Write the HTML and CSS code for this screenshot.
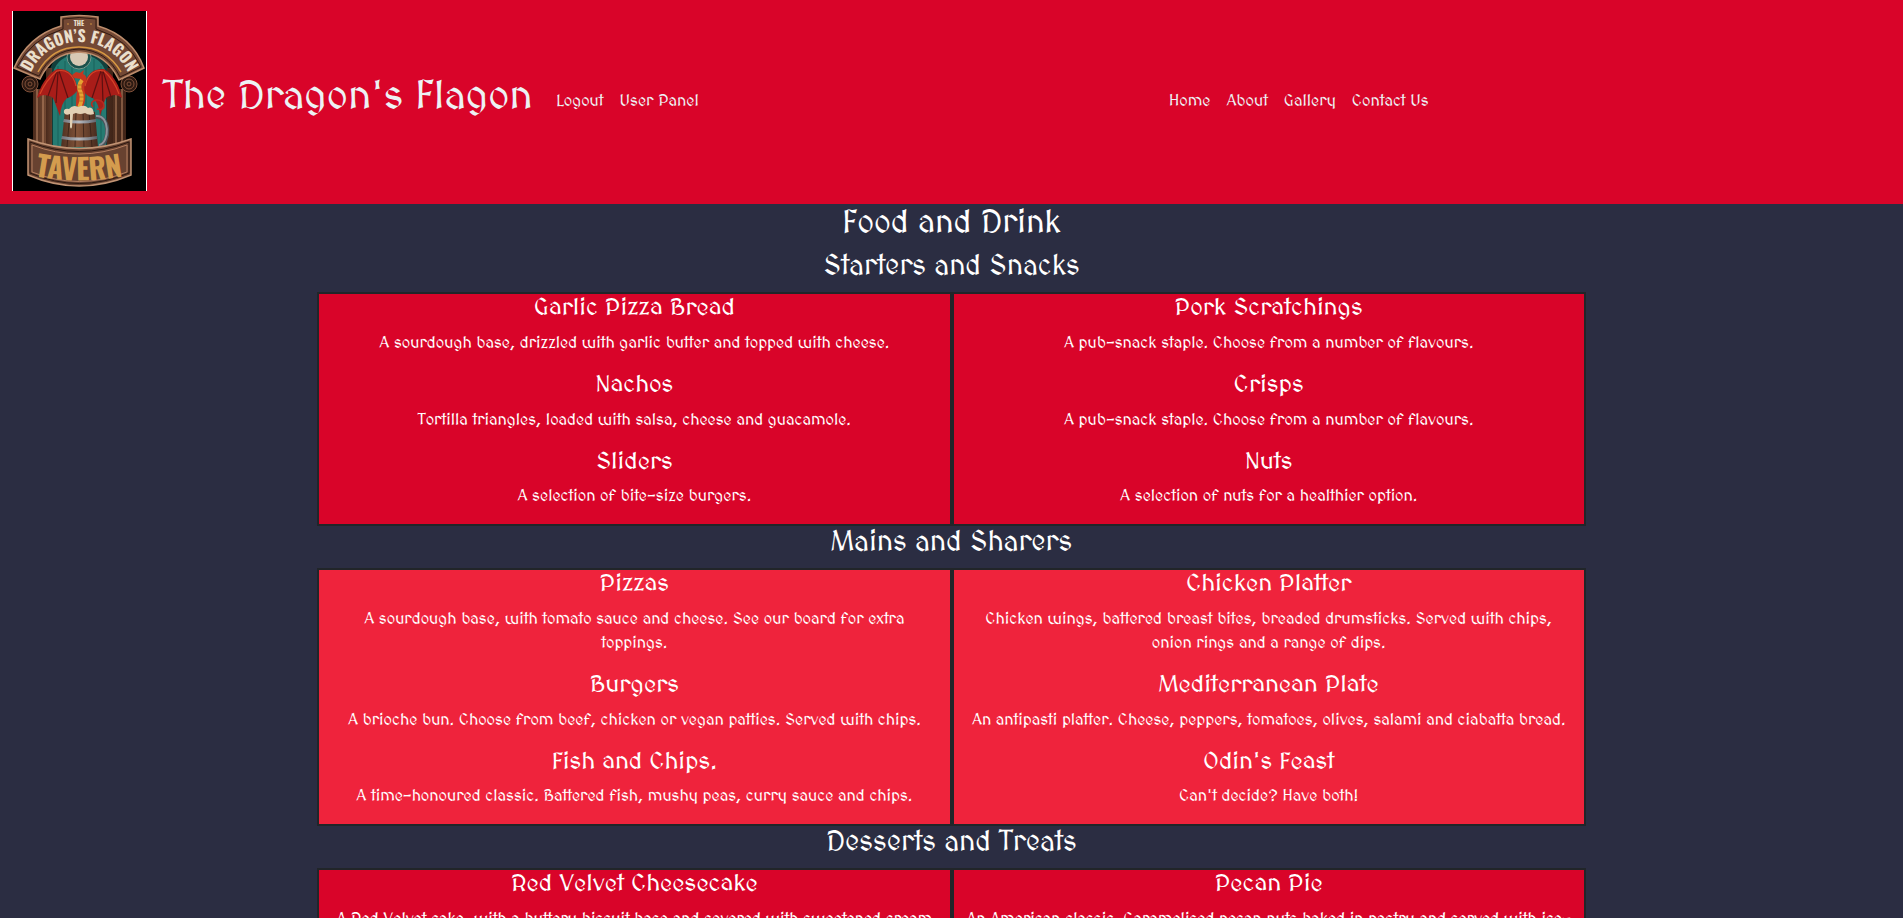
FILE: index.html
```html
<!DOCTYPE html>
<html lang="en">
<head>
<meta charset="utf-8">
<title>The Dragon's Flagon</title>
<link rel="stylesheet" href="styles.css">
</head>
<body>
<header class="navbar">
  <a class="brand" href="#">
    <svg class="logo" viewBox="0 0 135 180" role="img" aria-label="The Dragon's Flagon Tavern">
      <defs>
        <linearGradient id="wood" x1="0" x2="1" y1="0" y2="0">
          <stop offset="0" stop-color="#4a2a1c"/><stop offset=".3" stop-color="#a06c4c"/><stop offset=".6" stop-color="#6b412d"/><stop offset="1" stop-color="#3f2418"/>
        </linearGradient>
        <linearGradient id="barrel" x1="0" x2="1" y1="0" y2="0">
          <stop offset="0" stop-color="#4e3021"/><stop offset=".45" stop-color="#835439"/><stop offset="1" stop-color="#452a1e"/>
        </linearGradient>
        <linearGradient id="steel" x1="0" x2="1" y1="0" y2="0">
          <stop offset="0" stop-color="#6c7078"/><stop offset=".5" stop-color="#b4b8bf"/><stop offset="1" stop-color="#5c6068"/>
        </linearGradient>
        <path id="arc" d="M18 64C35 20 99 20 117 64"/>
        <path id="base" d="M16 164Q67 175 118 164"/>
      </defs>
      <path fill="#000" d="M0 0h135v180H0z"/>
      <path fill="#fff" d="M0 0h1v180H0zM134 0h1v180h-1z"/>
      <path fill="#123f3c" d="M37 145V62Q40 42 67 40Q95 42 98 62V145z"/>
      <path fill="#257b72" d="M41 143V62Q45 45 67 43Q90 45 94 62V143z"/>
      <path stroke="#1b625b" stroke-width="1" d="M46 55v86M53 50v90M60 45v95M74 45v95M82 48v92M89 55v86"/>
      <circle cx="67" cy="46" r="12" fill="#1b514b" stroke="#78988b"/>
      <circle cx="67" cy="46" r="9" fill="#d8c9b4"/>
      <path fill="url(#wood)" d="M21 78h14v66H21zM100 78h14v66h-14z"/>
      <path fill="none" stroke="#be8966" d="M25 78v58M31 78v65M104 78v65M110 78v58"/>
      <path fill="url(#wood)" d="M34 57h6v87h-6zM95 57h6v87h-6z"/>
      <g fill="#2d1a12" stroke="#805039" stroke-width="1">
        <circle cx="18" cy="73" r="8"/><circle cx="18" cy="73" r="5"/><circle cx="18" cy="73" r="2"/>
        <circle cx="117" cy="73" r="8"/><circle cx="117" cy="73" r="5"/><circle cx="117" cy="73" r="2"/>
      </g>
      <path fill="#734834" stroke="#bd8d6c" stroke-width="1.5" d="M2 57Q16 25 49 15V6Q67 3 86 6V15Q120 25 132 57L107 69Q94 42 67 41Q40 42 28 68z"/>
      <path fill="none" stroke="#2f1a12" d="M5 56Q19 28 51 18V8Q67 5 84 8V18Q116 28 129 56L108 66Q95 39 67 38Q39 39 27 65z"/>
      <path fill="none" stroke="#d79842" stroke-width="1.5" d="M26 61Q40 36 67 36Q94 36 109 61"/>
      <g class="sign">
        <text class="the" x="67" y="15" text-anchor="middle" fill="#eadfcc">THE</text>
        <text class="name" fill="#eadfcc"><textPath href="#arc" startOffset="50%" text-anchor="middle">DRAGON’S FLAGON</textPath></text>
      </g>
      <circle cx="56" cy="13" r=".8" fill="#d79842"/><circle cx="79" cy="13" r=".8" fill="#d79842"/>
      <path fill="url(#barrel)" d="M53 100Q69 95 83 101L86 136H49z"/>
      <path stroke="#352016" stroke-width=".8" d="M58 101l-3 35M64 100l-1 36M71 100l1 36M77 101l3 35"/>
      <path fill="none" stroke="#4b5057" stroke-width="4" d="M84 106C99 104 98 133 87 135"/>
      <path fill="none" stroke="#8d949b" stroke-width="2" d="M84 105C98 103 98 132 87 134"/>
      <path fill="url(#steel)" d="M52 108q16 3 32 0v3q-16 3-33 0zM50 125q17 3 35 0v3q-17 3-36 0z"/>
      <path fill="#a91d19" d="M65 76C63 62 54 57 45 58C34 64 28 76 25 87Q31 82 36 85Q41 84 43 92L48 105Q49 92 55 87Q60 86 65 80zM72 76C74 62 83 57 92 58C102 64 108 76 110 87Q104 82 99 85Q94 84 92 92L88 105Q87 92 81 87Q76 86 71 80z"/>
      <path fill="none" stroke="#5d1010" stroke-width="1.2" d="M45 60L36 85M46 61L44 92M47 60L56 87M91 60L99 86M90 61L91 92M89 60L80 87"/>
      <path fill="none" stroke="#d64427" stroke-width="1.2" d="M64 75C61 62 53 58 45 60Q34 69 28 83M73 75C76 62 84 58 92 60Q102 69 107 83"/>
      <path fill="#c5361f" d="M60 64L64 61L68 62L72 59L71 63Q76 65 74 71Q71 76 73 82Q74 90 71 96L64 95Q64 86 65 79Q66 73 69 68L62 67z"/>
      <path fill="none" stroke="#e6a332" stroke-width="4" d="M70 69Q65 75 69 82Q71 88 67 97"/>
      <path stroke="#a75d1e" stroke-width=".7" d="M66 74h5M66 78h5M67 82h5M67 86h5M66 90h5"/>
      <path fill="none" stroke="#ba2b20" stroke-width="1.6" d="M85 98C95 101 94 88 84 89Q77 91 81 96"/>
      <path fill="#e2d0b4" d="M52 102Q51 97 57 98Q61 93 66 96Q73 93 76 97Q81 95 82 103Q77 105 73 102Q68 104 64 102L61 103L60 116Q59 119 58 116V103Q54 105 52 102z"/>
      <path fill="#684230" stroke="#c19373" stroke-width="1.5" d="M16 128Q67 147 119 128V164Q67 186 16 164z"/>
      <path fill="none" stroke="#2c1810" d="M18 131Q67 150 117 131V162Q67 183 18 162z"/>
      <path fill="none" stroke="#b68060" d="M20 134Q67 152 115 134V161Q67 180 20 161z"/>
      <text class="tavern" fill="#d49c4e"><textPath href="#base" startOffset="50%" text-anchor="middle">TAVERN</textPath></text>
    </svg>
    <span class="brand-name">The Dragon's Flagon</span>
  </a>
  <nav class="links" aria-label="Account">
    <a href="#">Logout</a>
    <a href="#">User Panel</a>
  </nav>
  <nav class="links links-main" aria-label="Main">
    <a href="#">Home</a>
    <a href="#">About</a>
    <a href="#">Gallery</a>
    <a href="#">Contact Us</a>
  </nav>
</header>
<main class="menu">
  <h1 class="menu-title">Food and Drink</h1>
  <h2 class="section-title">Starters and Snacks</h2>
  <section class="row">
    <div class="card">
      <h3>Garlic Pizza Bread</h3>
      <p>A sourdough base, drizzled with garlic butter and topped with cheese.</p>
      <h3>Nachos</h3>
      <p>Tortilla triangles, loaded with salsa, cheese and guacamole.</p>
      <h3>Sliders</h3>
      <p>A selection of bite-size burgers.</p>
    </div>
    <div class="card">
      <h3>Pork Scratchings</h3>
      <p>A pub-snack staple. Choose from a number of flavours.</p>
      <h3>Crisps</h3>
      <p>A pub-snack staple. Choose from a number of flavours.</p>
      <h3>Nuts</h3>
      <p>A selection of nuts for a healthier option.</p>
    </div>
  </section>
  <h2 class="section-title">Mains and Sharers</h2>
  <section class="row row-light">
    <div class="card">
      <h3>Pizzas</h3>
      <p>A sourdough base, with tomato sauce and cheese. See our board for extra toppings.</p>
      <h3>Burgers</h3>
      <p>A brioche bun. Choose from beef, chicken or vegan patties. Served with chips.</p>
      <h3>Fish and Chips.</h3>
      <p>A time-honoured classic. Battered fish, mushy peas, curry sauce and chips.</p>
    </div>
    <div class="card">
      <h3>Chicken Platter</h3>
      <p>Chicken wings, battered breast bites, breaded drumsticks. Served with chips, onion rings and a range of dips.</p>
      <h3>Mediterranean Plate</h3>
      <p>An antipasti platter. Cheese, peppers, tomatoes, olives, salami and ciabatta bread.</p>
      <h3>Odin's Feast</h3>
      <p>Can't decide? Have both!</p>
    </div>
  </section>
  <h2 class="section-title">Desserts and Treats</h2>
  <section class="row">
    <div class="card">
      <h3>Red Velvet Cheesecake</h3>
      <p>A Red Velvet cake, with a buttery biscuit base and covered with sweetened cream</p>
    </div>
    <div class="card">
      <h3>Pecan Pie</h3>
      <p>An American classic. Caramelised pecan nuts baked in pastry and served with ice-</p>
    </div>
  </section>
</main>
</body>
</html>
```
FILE: styles.css
```css
* { box-sizing: border-box; }

body {
  display: flex;
  flex-direction: column;
  height: 100vh;
  margin: 0;
  overflow: hidden;
  background: #fff;
  color: #fff;
  font-family: MedievalSharp, Macondo, Lato, sans-serif;
  font-size: 16px;
  line-height: 1.5;
}

h1, h2, h3, p { margin: 0; font-weight: 400; }
h1, h2, h3 { line-height: 1.2; padding-bottom: 8px; }

.navbar {
  display: flex;
  flex: none;
  align-items: center;
  padding: 11px 12px 13px;
  background: #d90429;
}

.navbar a { color: #edf2f4; text-decoration: none; }

.brand {
  display: flex;
  align-items: center;
  gap: 16px;
  margin-right: 16px;
}

.logo { width: 135px; height: 180px; flex: none; }

.sign, .tavern { font-family: Oswald, "Bebas Neue", "Liberation Sans Narrow", "Liberation Sans", sans-serif; font-weight: 700; }
.the { font-size: 7px; }
.name { font-size: 16px; }
.tavern { font-size: 29px; }

.brand-name { font-size: 40px; line-height: 1.2; padding-bottom: 8px; white-space: nowrap; }

.links { display: flex; }
.links a { padding: 8px; white-space: nowrap; }
.links-main { margin: 0 auto; }

.menu {
  flex: 1;
  min-height: 0;
  margin-bottom: 1px;
  overflow: hidden;
  background: #2b2d42;
  text-align: center;
}

.menu-title { font-size: 32px; }
.section-title { font-size: 28px; }

.row {
  display: grid;
  grid-template-columns: 1fr 1fr;
  width: 66.6667%;
  margin: 0 auto;
}

.card {
  padding: 0 12px;
  border: 2px solid #212529;
  background: #d90429;
}
.row-light .card { background: #ef233c; }

.card h3 { font-size: 24px; }
.card p { padding-bottom: 16px; }
```
